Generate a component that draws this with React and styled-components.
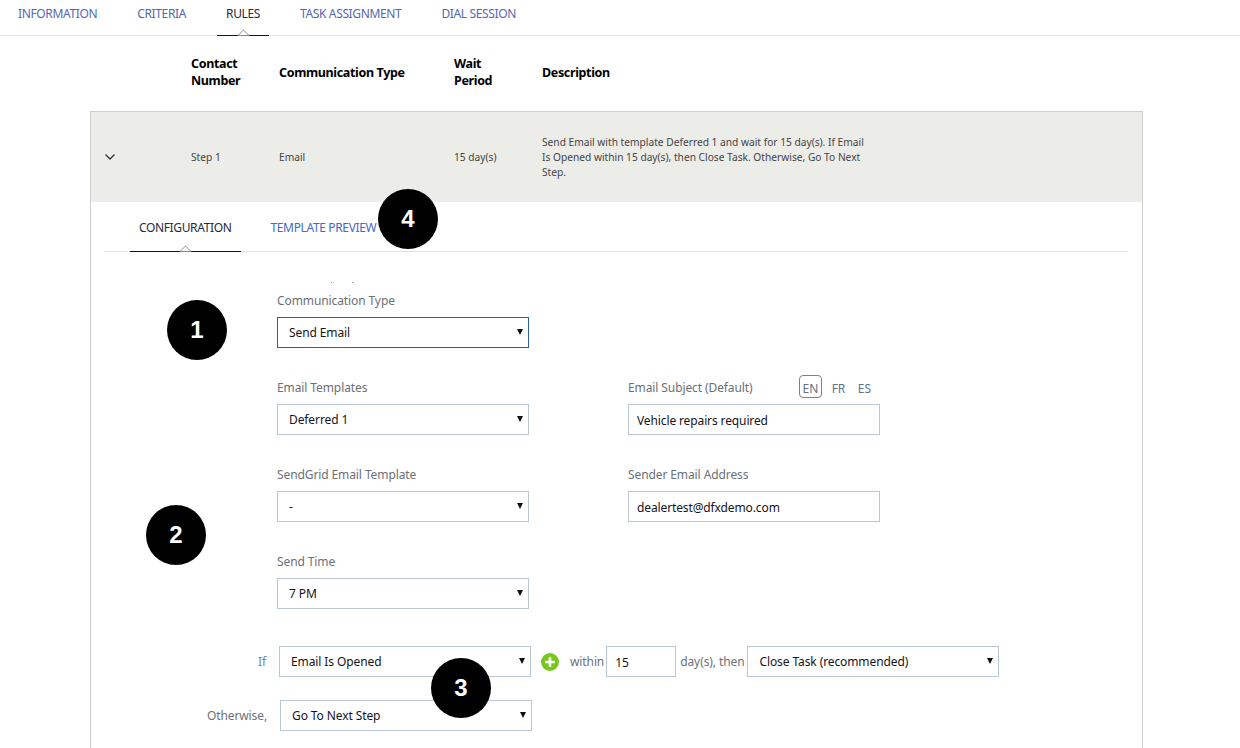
import React from "react";
import styled, { createGlobalStyle } from "styled-components";

const Global = createGlobalStyle`
  html, body { margin: 0; padding: 0; height: 748px; overflow: hidden; background: #fff; }
  body { font-family: "Noto Sans", "Open Sans", Arial, sans-serif; color: #111; }
  #root { height: 748px; overflow: hidden; }
`;

const Page = styled.div`
  position: relative;
  width: 1240px;
  height: 748px;
  overflow: hidden;
`;

const TabBar = styled.div`
  display: flex;
  height: ${p => p.$h}px;
  box-sizing: border-box;
  border-bottom: 1px solid #e3e3e3;
  gap: ${p => p.$gap}px;
  padding-left: ${p => p.$pad}px;
`;

const Tab = styled.div`
  position: relative;
  box-sizing: border-box;
  height: 100%;
  padding: ${p => p.$top}px ${p => p.$x}px 0;
  font-size: 12px;
  letter-spacing: -0.36px;
  line-height: 16px;
  white-space: nowrap;
  color: ${p => (p.$active ? "#2a2a35" : p.$color || "#5566b4")};
  ${p => p.$active && `
    &::before {
      content: "";
      position: absolute;
      left: 0; right: 0; bottom: -1px;
      height: 1px;
      background: #111;
    }
    &::after {
      content: "";
      position: absolute;
      left: 50%;
      bottom: -5px;
      width: 8px; height: 8px;
      margin-left: -4px;
      background: #fff;
      border-left: 1px solid #888;
      border-top: 1px solid #888;
      transform: rotate(45deg);
      clip-path: polygon(0 0, 100% 0, 0 100%);
    }
  `}
`;

const ColumnsHead = styled.div`
  display: grid;
  grid-template-columns: 101px 88px 175px 88px 1fr;
  align-items: center;
  height: 73px;
  margin: 0 97px 2px 90px;
  font-size: 12.5px;
  letter-spacing: -0.35px;
  line-height: 17px;
  font-weight: 700;
  color: #000;
`;

const HeadStack = styled.span`
  margin-top: -2px;
`;

const Panel = styled.div`
  margin: 0 97px 0 90px;
  border: 1px solid #cfcfcf;
  border-bottom: 0;
  height: 640px;
`;

const StepRow = styled.div`
  display: grid;
  grid-template-columns: 100px 88px 175px 88px 1fr;
  align-items: center;
  height: 90px;
  background: #ecece8;
  font-size: 10.2px;
  line-height: 15px;
  color: #444;
`;

const Chevron = styled.svg`
  width: 12px;
  height: 8px;
  margin-left: 13px;
`;

const Desc = styled.div`
  width: 324px;
`;

const PanelBody = styled.div`
  padding: 0 14px 0 13px;
`;

const FormGrid = styled.div`
  display: grid;
  grid-template-columns: 252px 252px;
  column-gap: 99px;
  grid-auto-rows: 87px;
  margin: 0 0 0 173px;
  padding-top: 7px;
`;

const Marks = styled.div`
  display: flex;
  gap: 20px;
  height: 1px;
  margin: 30px 0 0 227px;
`;

const Mark = styled.i`
  width: 1px;
  height: 1px;
  background: #8a8f96;
`;

const Field = styled.div`
  display: flex;
  flex-direction: column;
`;

const LabelRow = styled.div`
  display: flex;
  align-items: center;
  justify-content: space-between;
  height: 20px;
  margin-bottom: 7px;
`;

const Label = styled.span`
  font-size: 12px;
  letter-spacing: -0.1px;
  color: #6b7079;
  white-space: nowrap;
`;

const Langs = styled.div`
  display: flex;
  align-items: center;
  gap: 7px;
  margin-right: 6px;
  margin-top: -2px;
`;

const Lang = styled.span`
  box-sizing: border-box;
  min-width: ${p => (p.$on ? 23 : 19)}px;
  height: 23px;
  padding-top: 2px;
  line-height: 21px;
  text-align: center;
  font-size: 12px;
  color: ${p => (p.$on ? "#66707e" : "#5b7290")};
  border: 1px solid ${p => (p.$on ? "#7c828c" : "transparent")};
  border-radius: 4px;
`;

const Select = styled.div`
  position: relative;
  box-sizing: border-box;
  width: ${p => p.$w || 252}px;
  height: 31px;
  line-height: 29px;
  padding-left: 11px;
  font-size: 12px;
  letter-spacing: -0.1px;
  color: #14141a;
  background: #fff;
  border: 1px solid ${p => (p.$focus ? "#2f5ea8" : "#b9c6d3")};
  white-space: nowrap;
  flex: none;
  &::after {
    content: "";
    position: absolute;
    right: 5px;
    top: 11px;
    border-left: 3.5px solid transparent;
    border-right: 3.5px solid transparent;
    border-top: 6px solid #111;
  }
`;

const TextBox = styled.input`
  box-sizing: border-box;
  width: ${p => p.$w || 252}px;
  height: 31px;
  padding: 1px 0 0 8px;
  font: 12px "Noto Sans", "Open Sans", Arial, sans-serif;
  letter-spacing: -0.12px;
  color: #14141a;
  background: #fff;
  border: 1px solid #b9c6d3;
  border-radius: 0;
  outline: none;
  flex: none;
`;

const RuleRow = styled.div`
  display: flex;
  align-items: center;
  height: 31px;
  margin-top: ${p => p.$mt}px;
`;

const RuleLabel = styled.span`
  width: ${p => p.$w}px;
  flex: none;
  text-align: right;
  font-size: 12px;
  letter-spacing: -0.1px;
  color: ${p => p.$color || "#6b7079"};
  margin-right: ${p => p.$mr}px;
`;

const Word = styled.span`
  font-size: 12px;
  letter-spacing: -0.1px;
  color: #6b7079;
  white-space: nowrap;
  margin: 0 ${p => p.$r}px 0 ${p => p.$l}px;
`;

const Plus = styled.svg`
  width: 18px;
  height: 18px;
  margin-left: 10px;
  flex: none;
`;

const Badge = styled.div`
  position: absolute;
  left: ${p => p.$x - 30}px;
  top: ${p => p.$y - 30}px;
  width: 60px;
  height: 60px;
  border-radius: 50%;
  background: #000;
  color: #fff;
  font: 700 24px/60px "Liberation Sans", Arial, sans-serif;
  text-align: center;
`;

const SelectField = ({ label, value, focus }) => (
  <Field>
    <LabelRow><Label>{label}</Label></LabelRow>
    <Select $focus={focus}>{value}</Select>
  </Field>
);

export default function App() {
  return (
    <Page>
      <Global />
      <TabBar $h={36} $gap={22} $pad={9}>
        <Tab $top={6} $x={9}>INFORMATION</Tab>
        <Tab $top={6} $x={9}>CRITERIA</Tab>
        <Tab $top={6} $x={9} $active>RULES</Tab>
        <Tab $top={6} $x={9}>TASK ASSIGNMENT</Tab>
        <Tab $top={6} $x={9}>DIAL SESSION</Tab>
      </TabBar>

      <ColumnsHead>
        <span />
        <HeadStack>Contact<br />Number</HeadStack>
        <span>Communication Type</span>
        <HeadStack>Wait<br />Period</HeadStack>
        <span>Description</span>
      </ColumnsHead>

      <Panel>
        <StepRow>
          <Chevron viewBox="0 0 12 8">
            <path d="M1.5 1.5 L6 6 L10.5 1.5" fill="none" stroke="#333" strokeWidth="1.3" />
          </Chevron>
          <span>Step 1</span>
          <span>Email</span>
          <span>15 day(s)</span>
          <Desc>
            Send Email with template Deferred 1 and wait for 15 day(s). If Email Is Opened within 15 day(s), then Close Task. Otherwise, Go To Next Step.
          </Desc>
        </StepRow>

        <PanelBody>
          <TabBar $h={50} $gap={21} $pad={26}>
            <Tab $top={18} $x={9} $active>CONFIGURATION</Tab>
            <Tab $top={18} $x={9} $color="#3f6cc4">TEMPLATE PREVIEW</Tab>
          </TabBar>

          <Marks><Mark /><Mark /></Marks>

          <FormGrid>
            <SelectField label="Communication Type" value="Send Email" focus />
            <span />
            <SelectField label="Email Templates" value="Deferred 1" />
            <Field>
              <LabelRow>
                <Label>Email Subject (Default)</Label>
                <Langs>
                  <Lang $on>EN</Lang>
                  <Lang>FR</Lang>
                  <Lang>ES</Lang>
                </Langs>
              </LabelRow>
              <TextBox readOnly value="Vehicle repairs required" />
            </Field>
            <SelectField label="SendGrid Email Template" value="-" />
            <Field>
              <LabelRow><Label>Sender Email Address</Label></LabelRow>
              <TextBox readOnly value="dealertest@dfxdemo.com" />
            </Field>
            <SelectField label="Send Time" value="7 PM" />
          </FormGrid>

          <RuleRow $mt={8}>
            <RuleLabel $w={162} $mr={13} $color="#6d8aa8">If</RuleLabel>
            <Select>Email Is Opened</Select>
            <Plus viewBox="0 0 18 18">
              <circle cx="9" cy="9" r="9" fill="#76c81e" />
              <path d="M9 4.2v9.6M4.2 9h9.6" stroke="#fff" strokeWidth="2.6" />
            </Plus>
            <Word $l={11} $r={2}>within</Word>
            <TextBox readOnly value="15" $w={70} />
            <Word $l={4} $r={3}>day(s), then</Word>
            <Select>Close Task (recommended)</Select>
          </RuleRow>

          <RuleRow $mt={23}>
            <RuleLabel $w={163} $mr={13}>Otherwise,</RuleLabel>
            <Select>Go To Next Step</Select>
          </RuleRow>
        </PanelBody>
      </Panel>

      <Badge $x={197} $y={330}>1</Badge>
      <Badge $x={176} $y={535}>2</Badge>
      <Badge $x={461} $y={688}>3</Badge>
      <Badge $x={408} $y={219}>4</Badge>
    </Page>
  );
}
